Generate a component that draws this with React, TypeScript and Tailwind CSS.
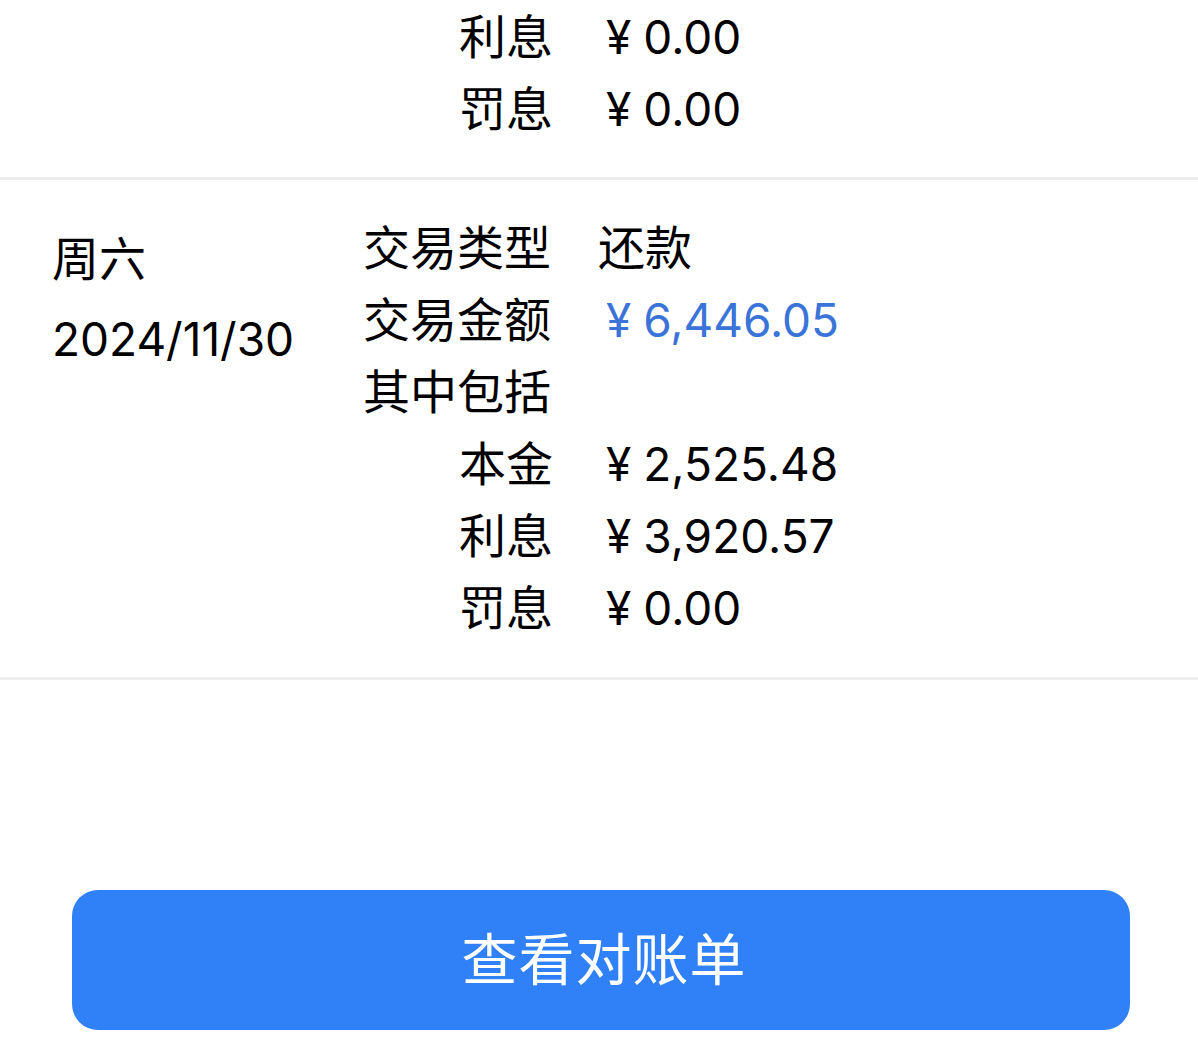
const font = "font-['Inter','Noto_Sans_CJK_SC',sans-serif]"

type Row = { label: string; value?: string; sub?: boolean; blue?: boolean }

const older: Row[] = [
  { label: "利息", value: "¥0.00", sub: true },
  { label: "罚息", value: "¥0.00", sub: true },
]

const current: Row[] = [
  { label: "交易类型", value: "还款" },
  { label: "交易金额", value: "¥6,446.05", blue: true },
  { label: "其中包括" },
  { label: "本金", value: "¥2,525.48", sub: true },
  { label: "利息", value: "¥3,920.57", sub: true },
  { label: "罚息", value: "¥0.00", sub: true },
]

function Value({ text, blue }: { text: string; blue?: boolean }) {
  const isMoney = text.startsWith("¥")
  return (
    <span className={`${blue ? "text-[#3b74d8]" : "text-black"} ${isMoney ? "pl-2 text-[46px]" : ""}`}>
      {isMoney ? (
        <>
          <span className="mr-[12px]">¥</span>
          {text.slice(1)}
        </>
      ) : text}
    </span>
  )
}

function Rows({ rows }: { rows: Row[] }) {
  return (
    <div className="flex flex-col">
      {rows.map((r, i) => (
        <div key={i} className="flex items-center h-[72px] leading-[72px] pt-[2px]">
          <span className={`w-[235px] shrink-0 ${r.sub ? "pl-[96px]" : ""}`}>{r.label}</span>
          {r.value && <Value text={r.value} blue={r.blue} />}
        </div>
      ))}
    </div>
  )
}

export default function App() {
  return (
    <div className={`w-[1198px] h-[1047px] bg-white overflow-hidden text-[47px] text-black ${font}`}>
      {/* previous record, cut off at the top */}
      <div className="flex pb-[33px]">
        <div className="w-[363px] shrink-0" />
        <Rows rows={older} />
      </div>
      <div className="h-[3px] bg-[#eeeeee]" />

      {/* 2024/11/30 */}
      <div className="flex pt-[31px] pb-[34px]">
        <div className="w-[363px] shrink-0 pl-[52px] pt-[8px] leading-[80px]">
          <div>周六</div>
          <div className="text-[46px]">2024/11/30</div>
        </div>
        <Rows rows={current} />
      </div>
      <div className="h-[3px] bg-[#eeeeee]" />

      <div className="pl-[72px] pr-[68px] pt-[210px]">
        <button className="w-full h-[140px] rounded-[26px] bg-[#3081f8] text-white text-[56px] pl-[6px] tracking-[1px]">
          查看对账单
        </button>
      </div>
    </div>
  )
}
